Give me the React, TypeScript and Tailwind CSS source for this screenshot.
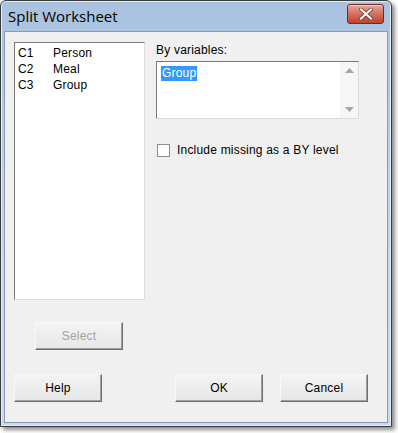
import React from "react";

const font = { fontFamily: '"Liberation Sans", Tahoma, sans-serif' };

function Btn({ label, disabled, w = "w-[88px]" }: { label: string; disabled?: boolean; w?: string }) {
    return (
        <div
            className={`${w} h-[28px] flex items-center justify-center text-[12px] tracking-[0.2px] bg-gradient-to-b from-[#f4f4f4] to-[#e6e6e6] border border-t-[#f8f8f8] border-l-[#f8f8f8] border-r-[#6e6e6e] border-b-[#6e6e6e] shadow-[inset_-1px_-1px_0_#a0a0a0] ${disabled ? "text-[#a3a3a3]" : "text-black"}`}
        >
            {label}
        </div>
    );
}

export default function App() {
    return (
        <div className="w-[398px] h-[433px] bg-white" style={font}>
            <div className="w-[392px] h-[427px] flex flex-col border border-[#3a3a3a] rounded-t-[6px] bg-gradient-to-b from-[#a9c2df] via-[#c0d4ec] to-[#c6daf0] px-[3px] pb-[3px] shadow-[inset_0_0_0_1px_#e4eef9,3px_3px_4px_rgba(0,0,0,0.45)]">
                {/* Title bar */}
                <div className="h-[30px] flex items-center justify-between shrink-0">
                    <span className="pl-[4px] text-[15px] text-black" style={{ fontFamily: '"Open Sans", "Noto Sans", sans-serif' }}>
                        Split Worksheet
                    </span>
                    <div className="mr-[4px] mt-[-4px] w-[37px] h-[20px] rounded-[3px] border border-[#6b2c23] bg-gradient-to-b from-[#e8a597] via-[#d2705e] to-[#c0412a] shadow-[inset_0_1px_0_#f5cfc6] flex items-center justify-center">
                        <svg width="14" height="12" viewBox="0 0 14 12">
                            <path d="M2 1.5 L12 10.5 M12 1.5 L2 10.5" stroke="#5a2a22" strokeWidth="3.6" strokeLinecap="square" />
                            <path d="M2 1.5 L12 10.5 M12 1.5 L2 10.5" stroke="#ffffff" strokeWidth="2.2" strokeLinecap="square" />
                        </svg>
                    </div>
                </div>

                {/* Content */}
                <div className="flex-1 bg-[#f0f0f0] border border-[#8a9bb0] flex flex-col text-[12px] tracking-[0.2px]">
                    <div className="flex pt-[10px] pl-[9px]">
                        {/* Left list */}
                        <div className="flex flex-col">
                            <div className="w-[131px] h-[258px] bg-white border border-t-[#7a7a7a] border-l-[#7a7a7a] border-r-[#dcdcdc] border-b-[#dcdcdc] pt-[2px] pl-[3px] leading-[16px]">
                                {[
                                    ["C1", "Person"],
                                    ["C2", "Meal"],
                                    ["C3", "Group"],
                                ].map(([c, n]) => (
                                    <div key={c} className="flex">
                                        <span className="w-[35px]">{c}</span>
                                        <span>{n}</span>
                                    </div>
                                ))}
                            </div>
                            <div className="pl-[21px] pt-[22px]">
                                <Btn label="Select" disabled />
                            </div>
                        </div>

                        {/* Right */}
                        <div className="ml-[11px] flex flex-col">
                            <span className="leading-[14px] mt-[1px]">By variables:</span>
                            <div className="mt-[4px] w-[203px] h-[58px] bg-white border border-t-[#7a7a7a] border-l-[#7a7a7a] border-r-[#dcdcdc] border-b-[#dcdcdc] flex">
                                <div className="flex-1 pl-[4px] pt-[2px]">
                                    <span className="bg-[#3399ff] text-white leading-[15px] inline-block px-[1px]">Group</span>
                                </div>
                                <div className="w-[18px] bg-[#f6f6f6] flex flex-col items-center justify-between py-[6px]">
                                    <svg width="9" height="5" viewBox="0 0 9 5"><path d="M0 5 L4.5 0 L9 5 Z" fill="#a5a5a5" /></svg>
                                    <svg width="9" height="5" viewBox="0 0 9 5"><path d="M0 0 L4.5 5 L9 0 Z" fill="#a5a5a5" /></svg>
                                </div>
                            </div>
                            <div className="mt-[22px] flex items-center">
                                <div className="w-[13px] h-[13px] bg-white border border-[#8f8f8f] ml-[1px]"></div>
                                <span className="ml-[7px]">Include missing as a BY level</span>
                            </div>
                        </div>
                    </div>

                    <div className="flex pl-[9px] pt-[24px]">
                        <Btn label="Help" />
                        <div className="ml-[73px]">
                            <Btn label="OK" />
                        </div>
                        <div className="ml-[17px]">
                            <Btn label="Cancel" />
                        </div>
                    </div>
                </div>
            </div>
        </div>
    );
}
